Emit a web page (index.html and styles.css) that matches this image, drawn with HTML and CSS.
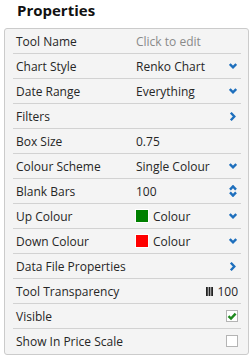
FILE: index.html
```html
<html>
<head>
    <title>Properties</title>
    <link rel="stylesheet" href="styles.css">
</head>
<body>

    <h1 class="title">Properties</h1>
    <div class="panel">
        <div class="row">
            <span class="label">Tool Name</span>
            <span class="value muted">Click to edit</span>
        </div>
        <div class="row">
            <span class="label">Chart Style</span>
            <span class="value">Renko Chart</span>
            <svg class="icon" width="8" height="6" viewBox="0 0 8 6"><path d="M0.8 1 L4 4.3 L7.2 1" fill="none" stroke="#1e6fbd" stroke-width="2.4"/></svg>
        </div>
        <div class="row">
            <span class="label">Date Range</span>
            <span class="value">Everything</span>
            <svg class="icon" width="8" height="6" viewBox="0 0 8 6"><path d="M0.8 1 L4 4.3 L7.2 1" fill="none" stroke="#1e6fbd" stroke-width="2.4"/></svg>
        </div>
        <div class="row">
            <span class="label">Filters</span>
            <span class="value"></span>
            <svg class="icon" width="8" height="9" viewBox="0 0 8 9"><path d="M1.8 0.8 L5.3 4.5 L1.8 8.2" fill="none" stroke="#1e6fbd" stroke-width="2.4"/></svg>
        </div>
        <div class="row">
            <span class="label">Box Size</span>
            <span class="value">0.75</span>
        </div>
        <div class="row">
            <span class="label">Colour Scheme</span>
            <span class="value">Single Colour</span>
            <svg class="icon" width="8" height="6" viewBox="0 0 8 6"><path d="M0.8 1 L4 4.3 L7.2 1" fill="none" stroke="#1e6fbd" stroke-width="2.4"/></svg>
        </div>
        <div class="row">
            <span class="label">Blank Bars</span>
            <span class="value">100</span>
            <svg class="icon" width="8" height="12" viewBox="0 0 8 12"><path d="M1 4.6 L4 1.4 L7 4.6 M1 7.4 L4 10.6 L7 7.4" fill="none" stroke="#1e6fbd" stroke-width="2.4"/></svg>
        </div>
        <div class="row">
            <span class="label">Up Colour</span>
            <span class="value"><span class="swatch green"></span>Colour</span>
            <svg class="icon" width="8" height="6" viewBox="0 0 8 6"><path d="M0.8 1 L4 4.3 L7.2 1" fill="none" stroke="#1e6fbd" stroke-width="2.4"/></svg>
        </div>
        <div class="row">
            <span class="label">Down Colour</span>
            <span class="value"><span class="swatch red"></span>Colour</span>
            <svg class="icon" width="8" height="6" viewBox="0 0 8 6"><path d="M0.8 1 L4 4.3 L7.2 1" fill="none" stroke="#1e6fbd" stroke-width="2.4"/></svg>
        </div>
        <div class="row">
            <span class="label">Data File Properties</span>
            <span class="value"></span>
            <svg class="icon" width="8" height="9" viewBox="0 0 8 9"><path d="M1.8 0.8 L5.3 4.5 L1.8 8.2" fill="none" stroke="#1e6fbd" stroke-width="2.4"/></svg>
        </div>
        <div class="row">
            <span class="label">Tool Transparency</span>
            <span class="value"></span>
            <span class="slider">
                <svg width="7" height="9" viewBox="0 0 7 9"><rect x="0" y="0" width="1.8" height="9" fill="#222"/><rect x="2.6" y="0" width="1.8" height="9" fill="#222"/><rect x="5.2" y="0" width="1.8" height="9" fill="#222"/></svg>
                100
            </span>
        </div>
        <div class="row">
            <span class="label">Visible</span>
            <span class="value"></span>
            <span class="check">
                <svg width="10" height="10" viewBox="0 0 10 10"><path d="M1.5 5.2 L4 7.6 L8.6 2.6" fill="none" stroke="#1f8a1f" stroke-width="2.4"/></svg>
            </span>
        </div>
        <div class="row">
            <span class="label">Show In Price Scale</span>
            <span class="value"></span>
            <span class="check"></span>
        </div>
    </div>

</body>
</html>
```

FILE: styles.css
```css
body {
    background-color: #fff;
    margin: 0;
    padding: 0;
    font-family: "Open Sans", "Liberation Sans", sans-serif;
    color: #262626;
}
.title {
    font-size: 15px;
    font-weight: 700;
    line-height: 20px;
    color: #111;
    margin: 0 0 8px 0;
    padding-left: 17px;
}
.panel {
    margin: 0 3px 0 4px;
    background-color: #f4f4f4;
    border: 1px solid #cbcbcb;
    border-radius: 3px;
    padding: 0 7px 1px 8px;
}
.row {
    display: flex;
    align-items: center;
    height: 24px;
    border-bottom: 1px solid #d2d2d2;
    padding: 0 3px 0 3px;
    font-size: 12px;
}
.row:last-child {
    border-bottom: none;
}
.label {
    width: 120px;
    white-space: nowrap;
}
.value {
    flex: 1;
    display: flex;
    align-items: center;
    white-space: nowrap;
}
.muted {
    color: #8a8a8a;
}
.icon {
    display: block;
    margin-right: 1px;
}
.swatch {
    display: inline-block;
    width: 12px;
    height: 12px;
    border: 1px solid #fff;
    margin: 0 4px 0 -1px;
}
.green {
    background: #008000;
}
.red {
    background: #ff0000;
}
.slider {
    display: flex;
    align-items: center;
    gap: 4px;
}
.check {
    display: flex;
    align-items: center;
    justify-content: center;
    width: 10px;
    height: 10px;
    background: #fff;
    border: 1px solid #b4b4b4;
}
```
